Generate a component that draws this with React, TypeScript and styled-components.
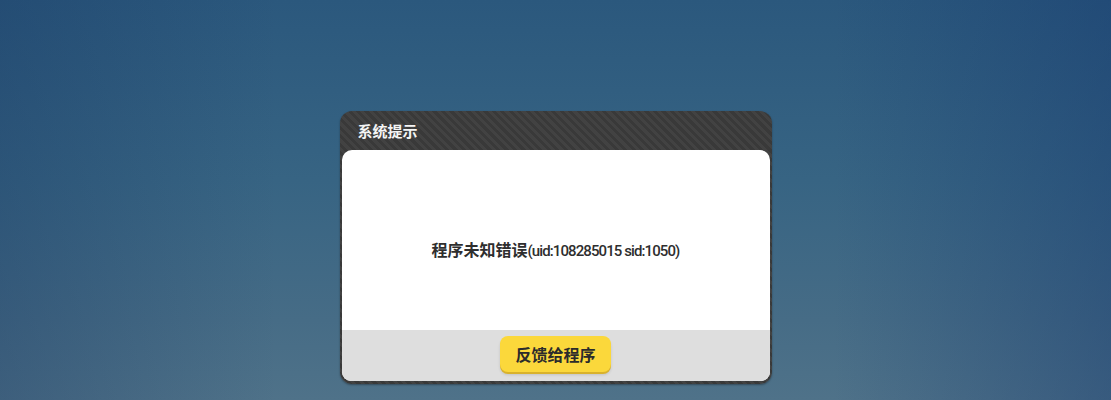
import React from "react";
import styled, { createGlobalStyle } from "styled-components";

const GlobalStyle = createGlobalStyle`
  html, body {
    margin: 0;
    padding: 0;
    height: 100%;
  }
  body {
    font-family: Roboto, "Noto Sans CJK SC", sans-serif;
  }
`;

const Screen = styled.div`
  height: 400px;
  width: 100%;
  overflow: hidden;
  display: flex;
  justify-content: center;
  align-items: flex-start;
  padding-top: 111px;
  box-sizing: border-box;
  background:
    linear-gradient(90deg, rgba(20, 50, 95, 0.3) 0%, rgba(20, 50, 95, 0) 25%, rgba(20, 50, 95, 0) 75%, rgba(20, 55, 110, 0.4) 100%),
    linear-gradient(180deg, #2b587d 0%, #376483 45%, #466c86 80%, #4f7289 100%);
`;

const Dialog = styled.div`
  width: 432px;
  height: 273px;
  box-sizing: border-box;
  background: repeating-linear-gradient(45deg, #393939 0 3px, #424242 3px 6px);
  border-radius: 12px;
  padding: 0 2px 3px 2px;
  display: flex;
  flex-direction: column;
  box-shadow: 0 1px 2px rgba(0, 0, 0, 0.35);
`;

const Header = styled.div`
  height: 39px;
  flex: none;
  display: flex;
  align-items: center;
  padding-left: 16px;
  color: #f4f4f4;
  font-size: 15px;
  font-weight: 700;
  font-family: "Noto Sans CJK SC", sans-serif;
`;

const Panel = styled.div`
  flex: 1;
  display: flex;
  flex-direction: column;
  border-radius: 10px 10px 9px 9px;
  overflow: hidden;
  background: #ffffff;
`;

const Body = styled.div`
  flex: 1;
  display: flex;
  align-items: center;
  justify-content: center;
  padding-top: 18px;
`;

const Message = styled.div`
  font-size: 16px;
  font-weight: 700;
  color: #2e2e2e;
  white-space: nowrap;

  span {
    font-family: Roboto, sans-serif;
    font-weight: 500;
    font-size: 15px;
    letter-spacing: -0.9px;
  }
`;

const Footer = styled.div`
  height: 51px;
  flex: none;
  background: #dedede;
  display: flex;
  justify-content: center;
  align-items: center;
  padding-bottom: 4px;
  box-sizing: border-box;
`;

const Button = styled.button`
  width: 111px;
  height: 36px;
  border: none;
  border-radius: 8px;
  background: #fbd83b;
  box-shadow: 0 2px 0 #d9b22c, 0 3px 3px rgba(0, 0, 0, 0.12);
  color: #2b2b2b;
  font-family: "Noto Sans CJK SC", sans-serif;
  font-size: 16px;
  font-weight: 700;
  cursor: pointer;
  padding: 0;
`;

export default function App() {
  return (
    <>
      <GlobalStyle />
      <Screen>
        <Dialog>
          <Header>系统提示</Header>
          <Panel>
            <Body>
              <Message>
                程序未知错误<span>(uid:108285015 sid:1050)</span>
              </Message>
            </Body>
            <Footer>
              <Button>反馈给程序</Button>
            </Footer>
          </Panel>
        </Dialog>
      </Screen>
    </>
  );
}
